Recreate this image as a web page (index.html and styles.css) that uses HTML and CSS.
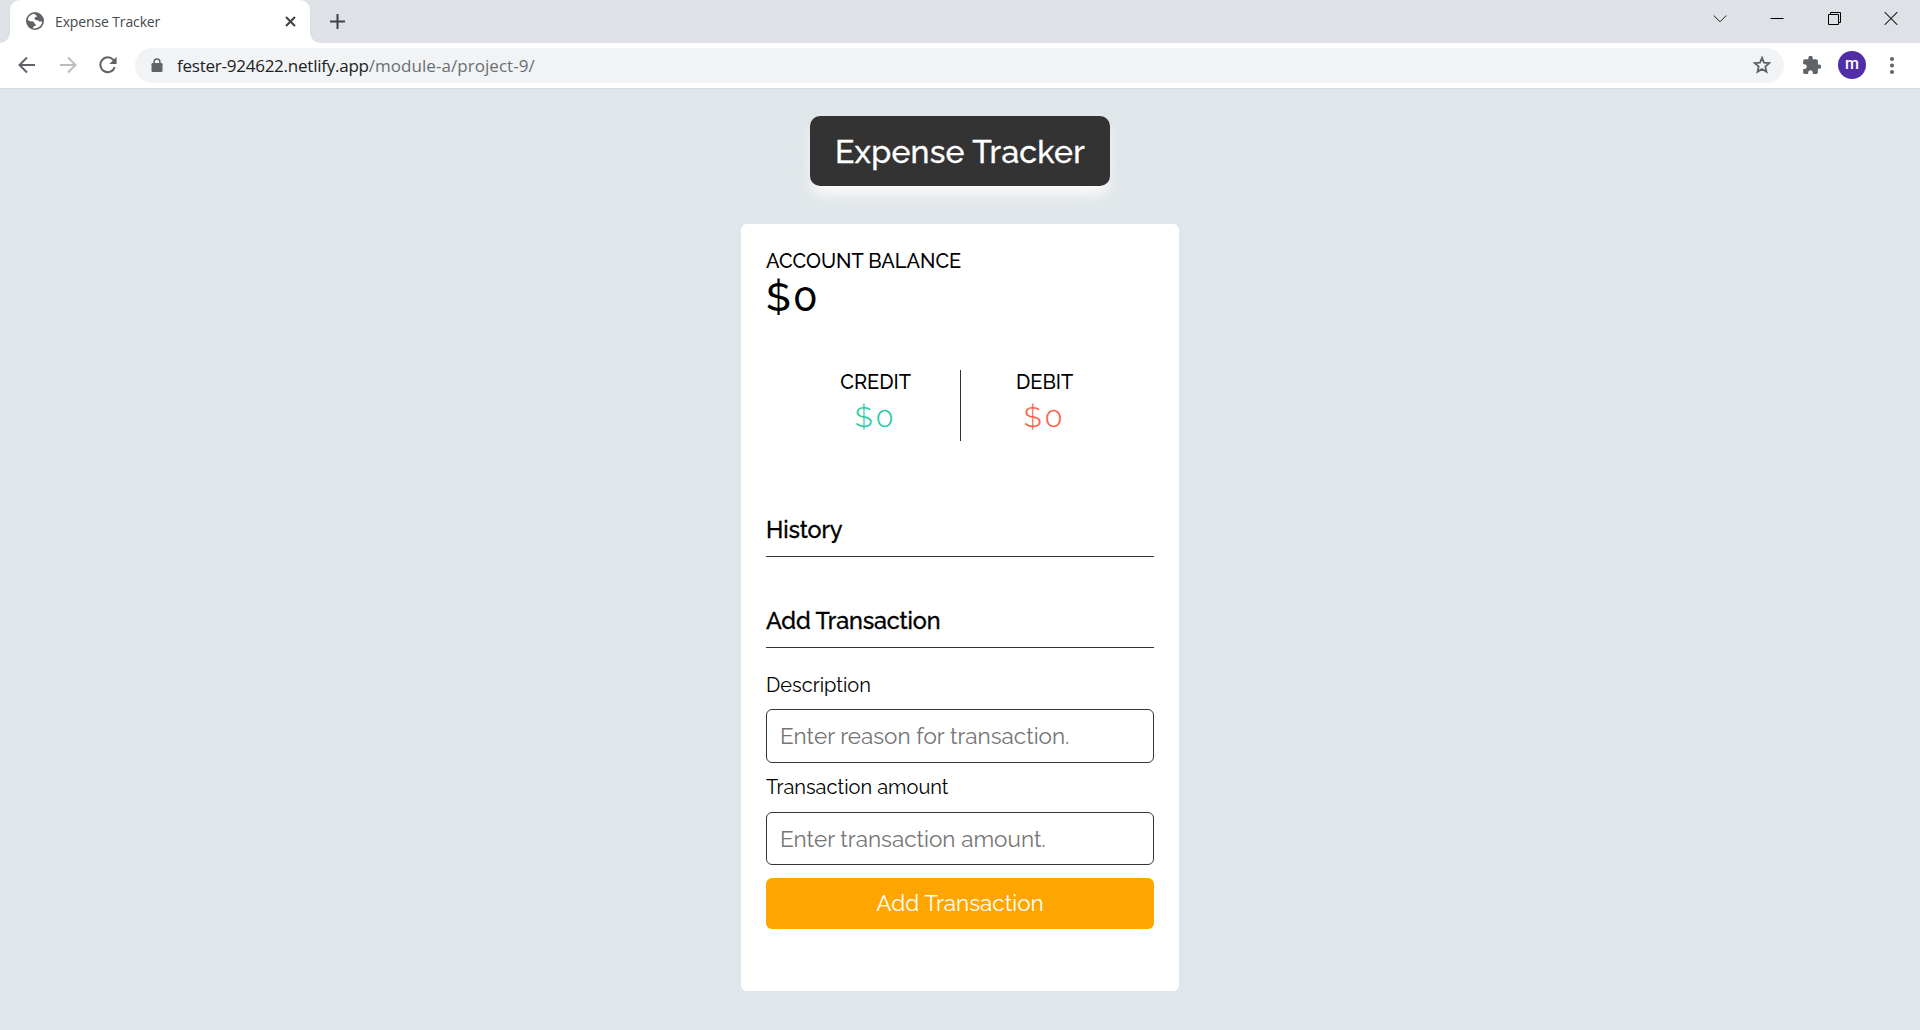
FILE: index.html
```html
<!DOCTYPE html>
<html lang="en">
<head>
<meta charset="utf-8">
<title>Expense Tracker</title>
<link rel="stylesheet" href="styles.css">
</head>
<body>
<header class="browser">
  <div class="tabstrip">
    <div class="tab">
      <svg class="favicon" width="18" height="18" viewBox="0 0 18 18"><circle cx="9" cy="9" r="9" fill="#5f6368"/><path d="M8.600 1.800C5.500 1.900 2.600 4 1.900 7.500C1.900 8.900 4 9.300 6.300 9.300C8.200 9.500 8.100 11.700 9.300 12.200C10.300 12.400 10 13.800 8.700 13.900C7.100 14.300 6.800 15.500 7.100 16.300C9.500 16.700 12.500 15.800 14.400 13.700C15.500 12.500 16.100 11 16.200 9.500L14.500 9.600C12.900 9.900 12.800 8.200 11.200 8.300C9.300 8.300 8.200 7.200 8.500 6.100C8.800 5 10.700 5.300 11 4.300C11.200 3.300 9 3.600 8.600 1.800Z" fill="#fff"/></svg>
      <span class="tab-title">Expense Tracker</span>
      <svg class="tab-close" width="11" height="11" viewBox="0 0 11 11"><path d="M1 1L10 10M10 1L1 10" stroke="#3c4043" stroke-width="2"/></svg>
    </div>
    <svg class="new-tab" width="15" height="15" viewBox="0 0 15 15"><path d="M7.500 0V15M0 7.500H15" stroke="#3c4043" stroke-width="2"/></svg>
    <div class="window-controls">
      <svg width="14" height="14" viewBox="0 0 14 14"><path d="M.7 4.500L7 10.800L13.300 4.500" fill="none" stroke="#222" stroke-width="1"/></svg>
      <svg width="14" height="14" viewBox="0 0 14 14"><path d="M.5 7.500H13.500" stroke="#000"/></svg>
      <svg width="14" height="14" viewBox="0 0 14 14"><path d="M1.500 3.500H11.500V13.500H1.500ZM3.500 3V1.500H13.500V11.500H12" fill="none" stroke="#000"/></svg>
      <svg width="14" height="14" viewBox="0 0 14 14"><path d="M.7 1.200L13.300 13.800M13.300 1.200L.7 13.800" stroke="#222" stroke-width="1.100"/></svg>
    </div>
  </div>
  <div class="toolbar">
    <svg class="back" width="18" height="18" viewBox="0 0 18 18"><path d="M17 9H2M9 1.500L1.500 9L9 16.500" fill="none" stroke="#5f6368" stroke-width="2"/></svg>
    <svg class="forward" width="18" height="18" viewBox="0 0 18 18"><path d="M1 9H16M9 1.500L16.500 9L9 16.500" fill="none" stroke="#babcbe" stroke-width="2"/></svg>
    <svg class="reload" width="18" height="18" viewBox="0 0 18 18"><path d="M15.800 11.200A7.400 7.400 0 1 1 14.300 3.800L16 5.500" fill="none" stroke="#5f6368" stroke-width="2"/><path d="M17.600 .8V8H10.400Z" fill="#5f6368"/></svg>
    <div class="address">
      <svg width="12" height="15" viewBox="0 0 12 15"><rect x=".5" y="5" width="11" height="9" rx="1.300" fill="#5f6368"/><path d="M3.100 5.500V3.800A2.900 2.900 0 0 1 8.900 3.800V5.500" fill="none" stroke="#5f6368" stroke-width="1.500"/></svg>
      <div class="url"><span class="host">fester-924622.netlify.app</span><span class="path">/module-a/project-9/</span></div>
      <svg class="star" width="18" height="18" viewBox="0 0 18 18"><path d="M9 1.800L11 6.700L16.300 7.100L12.300 10.600L13.500 15.800L9 13L4.500 15.800L5.700 10.600L1.700 7.100L7 6.700Z" fill="none" stroke="#5f6368" stroke-width="1.800"/></svg>
    </div>
    <svg class="extensions" width="18" height="18" viewBox="1.800 1.300 20.800 20.800"><path d="M20.500 11H19V7c0-1.100-.9-2-2-2h-4V3.500C13 2.120 11.880 1 10.500 1S8 2.120 8 3.500V5H4c-1.100 0-1.990.9-1.990 2v3.800H3.500c1.490 0 2.700 1.210 2.700 2.700s-1.210 2.700-2.700 2.700H2V20c0 1.100.9 2 2 2h3.800v-1.500c0-1.490 1.210-2.700 2.700-2.700 1.490 0 2.700 1.210 2.700 2.700V22H17c1.100 0 2-.9 2-2v-4h1.500c1.380 0 2.500-1.120 2.500-2.500S21.880 11 20.500 11z" fill="#5f6368"/></svg>
    <div class="avatar">m</div>
    <svg class="menu" width="4" height="17" viewBox="0 0 4 17"><g fill="#5f6368"><circle cx="2" cy="2" r="2"/><circle cx="2" cy="8.500" r="2"/><circle cx="2" cy="15" r="2"/></g></svg>
  </div>
</header>
<main class="page">
  <h1 class="title">Expense Tracker</h1>
  <section class="card">
    <h2 class="label">ACCOUNT BALANCE</h2>
    <p class="balance">$0</p>
    <div class="totals">
      <div class="total credit"><div class="total-inner"><h2 class="label">CREDIT</h2><p class="amount green">$0</p></div></div>
      <div class="total debit"><div class="total-inner"><h2 class="label">DEBIT</h2><p class="amount red">$0</p></div></div>
    </div>
    <h3 class="heading history">History</h3>
    <h3 class="heading add">Add Transaction</h3>
    <form class="form">
      <label class="field-label" for="description">Description</label>
      <input class="field" id="description" type="text" placeholder="Enter reason for transaction.">
      <label class="field-label second" for="amount">Transaction amount</label>
      <input class="field short" id="amount" type="text" placeholder="Enter transaction amount.">
      <button class="submit" type="button">Add Transaction</button>
    </form>
  </section>
</main>
</body>
</html>
```
FILE: styles.css
```css
* { box-sizing: border-box; margin: 0; padding: 0; }
body { height: 1030px; overflow: hidden; background: #e0e7ea; color: #000; font-family: Raleway, Lato, sans-serif; }
svg { display: block; flex: none; }

.browser { font-family: "Open Sans", "Noto Sans", sans-serif; }
.tabstrip { display: flex; height: 43px; background: #dee1e6; padding-left: 10px; }
.tab { position: relative; display: flex; align-items: center; width: 300px; height: 43px; padding: 0 14px 1px 16px; background: #fff; border-radius: 10px 10px 0 0; }
.tab::before, .tab::after { content: ""; position: absolute; bottom: 0; width: 10px; height: 10px; }
.tab::before { left: -10px; background: radial-gradient(circle at 0 0, transparent 9.5px, #fff 10px); }
.tab::after { right: -10px; background: radial-gradient(circle at 100% 0, transparent 9.5px, #fff 10px); }
.tab-title { flex: 1; margin-left: 11px; font-size: 14px; letter-spacing: -0.13px; color: #45494d; }
.new-tab { margin: 14px 0 0 20px; }
.window-controls { display: flex; gap: 43px; margin: 11px 22px 0 auto; }

.toolbar { display: flex; align-items: center; height: 46px; padding: 0 26px 1px 18px; background: #fff; border-bottom: 1px solid #d5d9dc; }
.forward { margin-left: 23px; }
.reload { margin-left: 22px; }
.address { display: flex; align-items: center; flex: 1; height: 35px; margin-left: 18px; padding: 0 13px 0 16px; background: #f1f3f4; border-radius: 18px; }
.url { flex: 1; margin-left: 14px; font-size: 17px; white-space: nowrap; }
.host { color: #202124; letter-spacing: -0.24px; }
.path { color: #6b6f73; letter-spacing: 0.05px; }
.extensions { margin-left: 19px; }
.avatar { width: 28px; height: 28px; margin-left: 17px; border-radius: 50%; background: #512da8; color: #fff; font: 500 16px/26px Roboto, sans-serif; text-align: center; }
.menu { margin-left: 24px; }

.page { display: flex; flex-direction: column; align-items: center; padding-top: 27px; }
.title { width: 300px; height: 70px; line-height: 72px; border-radius: 10px; background: #333; color: #fff; font-size: 32px; font-weight: 500; letter-spacing: 0.26px; -webkit-text-stroke: 0.3px; text-align: center; box-shadow: 0 10px 14px -4px #fff, 0 10px 24px rgba(236, 236, 236, 0.7); }
.card { width: 438px; margin-top: 38px; padding: 25px 25px 62px; background: #fff; border-radius: 6px; }
.label { font-size: 20px; font-weight: 500; line-height: 24px; }
.balance { font-size: 40px; font-weight: 500; line-height: 47px; letter-spacing: 2px; }
.totals { display: grid; grid-template-columns: 195px 193px; height: 71px; margin-top: 50px; }
.total { display: flex; text-align: center; }
.credit { justify-content: flex-end; padding-right: 49px; border-right: 1px solid #333; }
.debit { padding-left: 55px; }
.amount { font-size: 29px; font-weight: 300; line-height: 47px; letter-spacing: 3px; -webkit-text-stroke: 0.2px; }
.green { color: #1dcb9f; }
.red { color: #fb5c42; }
.heading { border-bottom: 1px solid #333; font-size: 23.4px; font-weight: 500; line-height: 27px; letter-spacing: -0.15px; -webkit-text-stroke: 0.3px; }
.history { margin-top: 75px; padding-bottom: 13px; }
.add { margin-top: 50px; padding-bottom: 13px; }
.form { display: flex; flex-direction: column; padding-top: 25px; }
.field-label { font-size: 20px; line-height: 25px; }
.second { margin-top: 12px; }
.field { height: 54px; margin-top: 11px; padding: 0 13px; border: 1px solid #333740; border-radius: 6px; background: #fff; font: 400 22.5px Raleway, Lato, sans-serif; }
.field::placeholder { color: #757575; }
.short { height: 53px; margin-top: 12px; }
.submit { height: 51px; margin-top: 13px; padding-bottom: 2px; border: 0; border-radius: 6px; background: orange; color: #fff; font: 400 22.5px Raleway, Lato, sans-serif; }
```
